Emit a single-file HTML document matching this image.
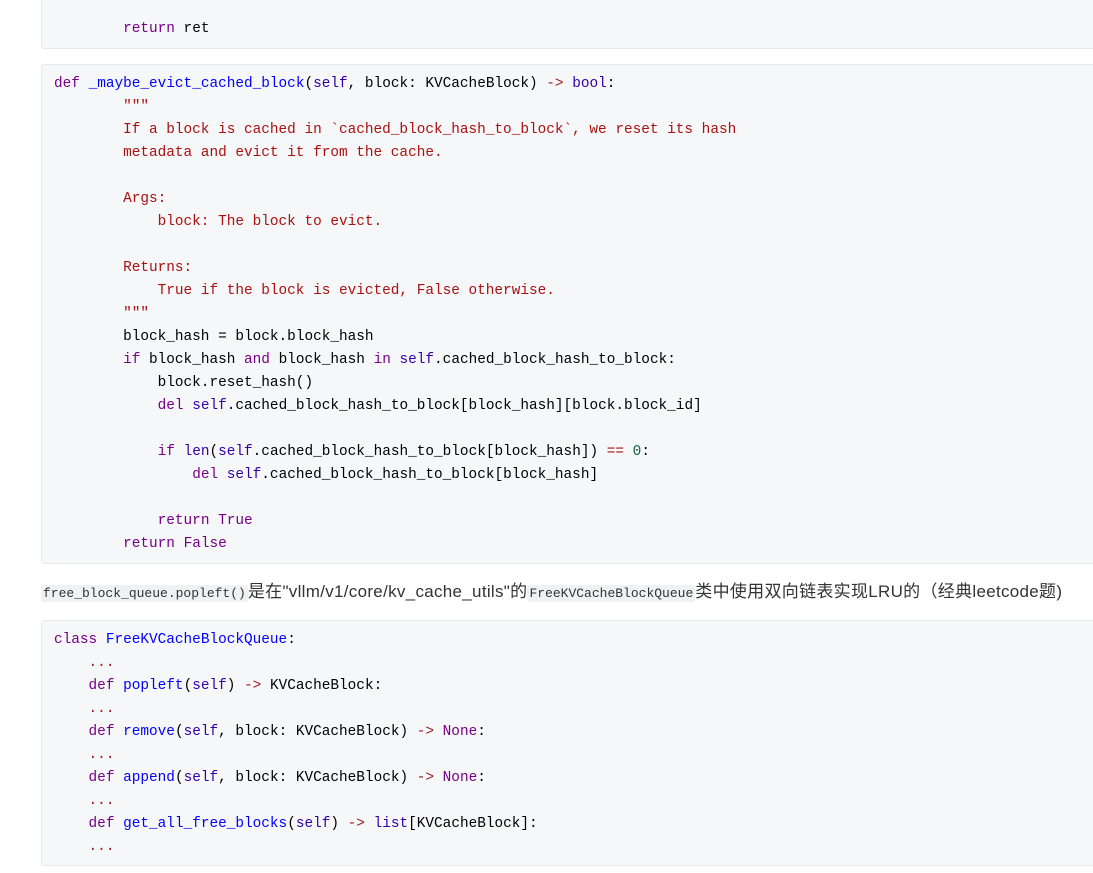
<!DOCTYPE html>
<html><head><meta charset="utf-8"><style>
body{margin:0;background:#fff;width:1093px;height:873px;overflow:hidden;position:relative;font-family:"Liberation Sans","Noto Sans CJK SC",sans-serif}
pre{position:absolute;left:41px;width:1080px;margin:0;background:#f6f7f8;border:1px solid #e8e9eb;border-radius:3px;box-sizing:border-box;padding:8px 12px;font-family:"Liberation Mono",monospace;font-size:14.4px;line-height:23px;color:#000;white-space:pre}
.k{color:#770088}.d{color:#0000ff}.s{color:#3300aa}.v{color:#0055aa}.st{color:#aa1111}.o{color:#981a1a}.n{color:#116644}.b{color:#3300aa}
p{position:absolute;left:41px;top:580px;margin:0;font-size:17px;line-height:24px;color:#333;white-space:nowrap;letter-spacing:0.3px}
code{font-family:"Liberation Mono",monospace;font-size:13px;background:#f0f1f2;padding:1px 2px;border-radius:2px;letter-spacing:0}
</style></head><body>
<pre style="top:-10px;height:59px;padding-top:27px">        <span class="k">return</span> ret</pre>
<pre style="top:64px;height:500px"><span class="k">def</span> <span class="d">_maybe_evict_cached_block</span>(<span class="s">self</span>, block: KVCacheBlock) <span class="o">-&gt;</span> <span class="b">bool</span>:
        <span class="st">"""</span>
<span class="st">        If a block is cached in `cached_block_hash_to_block`, we reset its hash</span>
<span class="st">        metadata and evict it from the cache.</span>

<span class="st">        Args:</span>
<span class="st">            block: The block to evict.</span>

<span class="st">        Returns:</span>
<span class="st">            True if the block is evicted, False otherwise.</span>
<span class="st">        """</span>
        block_hash = block.block_hash
        <span class="k">if</span> block_hash <span class="k">and</span> block_hash <span class="k">in</span> <span class="s">self</span>.cached_block_hash_to_block:
            block.reset_hash()
            <span class="k">del</span> <span class="s">self</span>.cached_block_hash_to_block[block_hash][block.block_id]

            <span class="k">if</span> <span class="b">len</span>(<span class="s">self</span>.cached_block_hash_to_block[block_hash]) <span class="o">==</span> <span class="n">0</span>:
                <span class="k">del</span> <span class="s">self</span>.cached_block_hash_to_block[block_hash]

            <span class="k">return</span> <span class="k">True</span>
        <span class="k">return</span> <span class="k">False</span></pre>
<p><code>free_block_queue.popleft()</code>是在"vllm/v1/core/kv_cache_utils"的<code>FreeKVCacheBlockQueue</code>类中使用双向链表实现LRU的（经典leetcode题)</p>
<pre style="top:620px;height:246px"><span class="k">class</span> <span class="d">FreeKVCacheBlockQueue</span>:
    <span class="o">...</span>
    <span class="k">def</span> <span class="d">popleft</span>(<span class="s">self</span>) <span class="o">-&gt;</span> KVCacheBlock:
    <span class="o">...</span>
    <span class="k">def</span> <span class="d">remove</span>(<span class="s">self</span>, block: KVCacheBlock) <span class="o">-&gt;</span> <span class="k">None</span>:
    <span class="o">...</span>
    <span class="k">def</span> <span class="d">append</span>(<span class="s">self</span>, block: KVCacheBlock) <span class="o">-&gt;</span> <span class="k">None</span>:
    <span class="o">...</span>
    <span class="k">def</span> <span class="d">get_all_free_blocks</span>(<span class="s">self</span>) <span class="o">-&gt;</span> <span class="b">list</span>[KVCacheBlock]:
    <span class="o">...</span></pre>
</body></html>
